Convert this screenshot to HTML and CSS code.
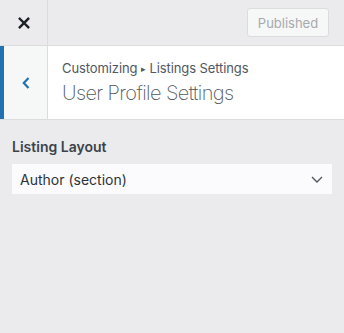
FILE: index.html
```html
<!DOCTYPE html>
<html lang="en">
<head>
  <meta charset="UTF-8" />
  <meta name="viewport" content="width=device-width, initial-scale=1.0"/>
  <title>Customizer</title>
  <link rel="stylesheet" href="styles.css">
</head>
<body>

  <!-- Barre du haut -->
  <div class="topbar">
    <button class="close-btn" aria-label="Close">
      <svg width="12" height="12" viewBox="0 0 12 12"><path d="M1.8 1.8 L10.2 10.2 M10.2 1.8 L1.8 10.2" stroke="#1d2327" stroke-width="2.4" stroke-linecap="square"/></svg>
    </button>
    <div class="actions">
      <button class="publish-btn" disabled>Published</button>
    </div>
  </div>

  <!-- Titre de la section -->
  <div class="section-head">
    <button class="back-btn" aria-label="Back">
      <svg width="8" height="12" viewBox="0 0 8 12"><path d="M6.5 1 L1.8 6 L6.5 11" fill="none" stroke="#2271b1" stroke-width="2.2"/></svg>
    </button>
    <div class="titles">
      <span class="crumb">Customizing <span class="sep">▸</span> Listings Settings</span>
      <h3 class="title">User Profile Settings</h3>
    </div>
  </div>

  <!-- Controles -->
  <div class="controls">
    <label class="control-label">Listing Layout</label>
    <div class="select-box">
      <span>Author (section)</span>
      <svg width="12" height="7" viewBox="0 0 12 7"><path d="M1 1 L6 6 L11 1" fill="none" stroke="#50575e" stroke-width="1.4"/></svg>
    </div>
  </div>

</body>
</html>
```

FILE: styles.css
```css
body {
  margin: 0;
  font-family: Inter, "Noto Sans", sans-serif;
  background: #ebebed;
  color: #3c434a;
  height: 333px;
}

.topbar {
  display: flex;
  align-items: stretch;
  height: 45px;
  border-bottom: 1px solid #dcdcde;
}

.close-btn {
  width: 48px;
  padding: 0;
  border: none;
  border-right: 1px solid #dcdcde;
  background: transparent;
  display: flex;
  align-items: center;
  justify-content: center;
}

.actions {
  flex: 1;
  display: flex;
  align-items: center;
  justify-content: flex-end;
  padding-right: 15px;
}

.publish-btn {
  font-family: inherit;
  font-size: 13px;
  height: 29px;
  width: 82px;
  padding: 0;
  border: 1px solid #dcdcde;
  border-radius: 3px;
  background: #f6f7f7;
  color: #a7aaad;
}

.section-head {
  display: flex;
  height: 73px;
  background: #fff;
  border-bottom: 1px solid #dcdcde;
}

.back-btn {
  width: 48px;
  padding: 0;
  border: none;
  border-left: 4px solid #2271b1;
  border-right: 1px solid #dcdcde;
  background: #f6f7f7;
  display: flex;
  align-items: center;
  justify-content: center;
}

.titles {
  display: flex;
  flex-direction: column;
  justify-content: center;
  padding-left: 14px;
  padding-bottom: 1px;
}

.crumb {
  font-size: 13px;
  line-height: 18px;
  color: #50575e;
  letter-spacing: -0.1px;
}

.sep {
  font-size: 9px;
  vertical-align: 1px;
}

.title {
  margin: 2px 0 0;
  font-size: 20px;
  line-height: 26px;
  font-weight: 200;
  letter-spacing: -0.6px;
  color: #50575e;
}

.controls {
  padding: 17px 12px;
}

.control-label {
  display: block;
  font-size: 14px;
  font-weight: 600;
  line-height: 20px;
  margin-bottom: 7px;
}

.select-box {
  display: flex;
  align-items: center;
  justify-content: space-between;
  height: 30px;
  padding: 0 9px 0 8px;
  background: #fbfbfd;
  font-size: 14px;
  color: #2c3338;
}
```
